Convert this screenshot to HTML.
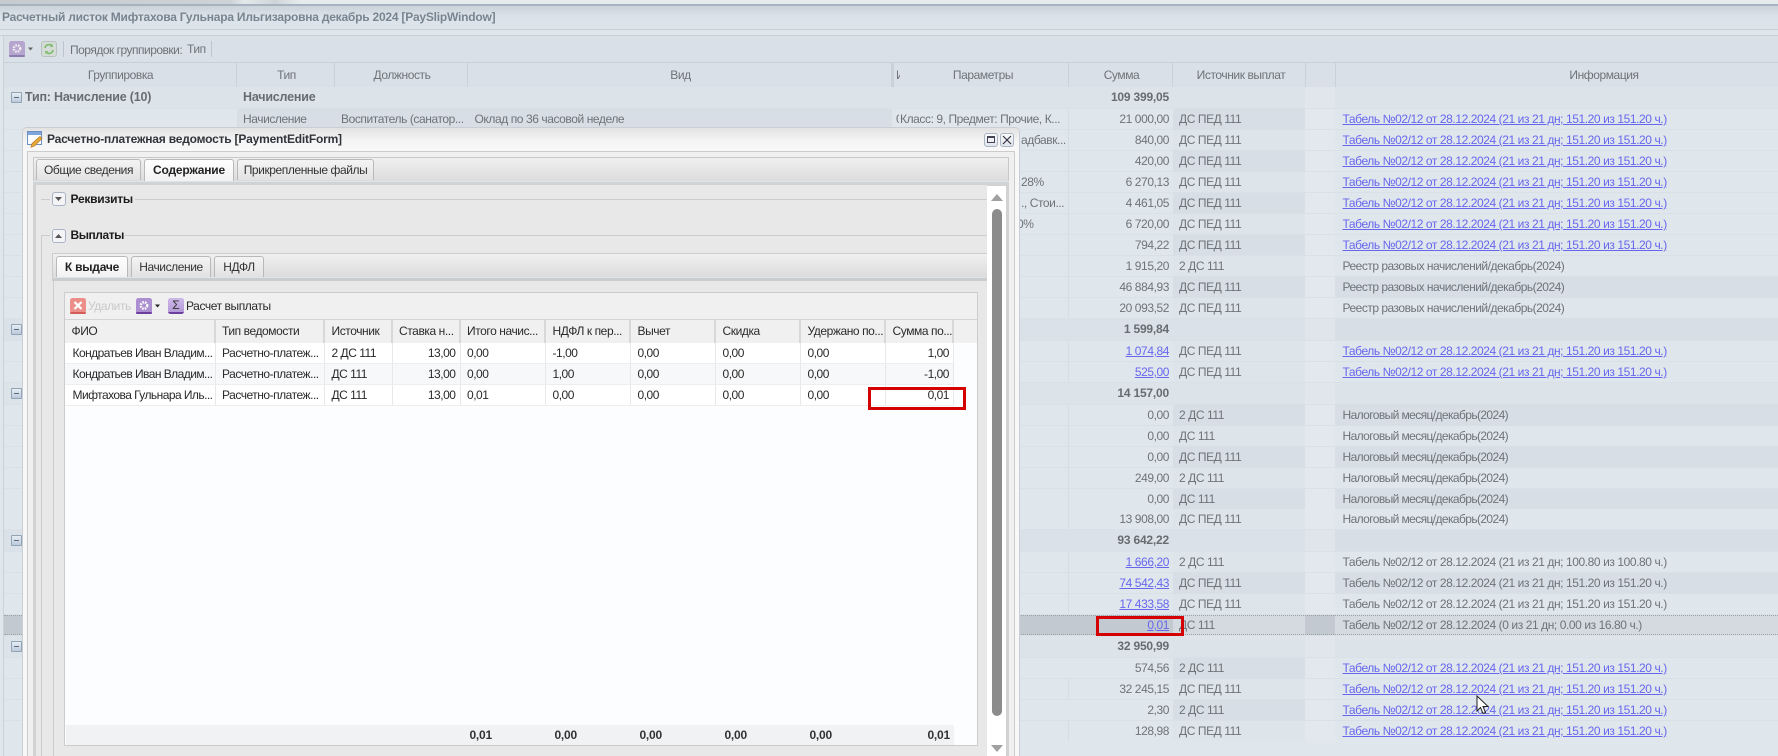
<!DOCTYPE html>
<html lang="ru"><head><meta charset="utf-8"><title>Расчетный листок</title>
<style>
html,body{margin:0;padding:0;width:1778px;height:756px;overflow:hidden}
body{position:relative;background:#dfe6ec;font:12px/20px "Liberation Sans",sans-serif;letter-spacing:-.42px;color:#6d7379}
div,span,a{position:absolute;white-space:nowrap}
a{color:#6767ee;text-decoration:underline}
.r{left:4px;width:1774px;height:20px}
.L{background:linear-gradient(90deg,#dfe6ec 0 232px,#d6dde4 232px 233px,#dfe6ec 233px 1064px,#d6dde4 1064px 1065px,#dfe6ec 1065px 1169px,#dde4ea 1169px 1301px,#e2e8ed 1301px 1331px,#dfe6ec 1331px)}
.D{background:linear-gradient(90deg,#dfe6ec 0 233px,#d7dee5 233px 888px,#dfe6ec 888px 1064px,#d6dde4 1064px 1065px,#dfe6ec 1065px 1169px,#d7dee5 1169px 1301px,#e2e8ed 1301px 1331px,#d7dee5 1331px)}
.K{background:linear-gradient(90deg,#dfe6ec 0 233px,#d7dee5 233px 888px,#dfe6ec 888px 1064px,#d6dde4 1064px 1065px,#dfe6ec 1065px 1169px,#d7dee5 1169px 1301px,#e2e8ed 1301px 1331px,#dfe6ec 1331px)}
.M{background:linear-gradient(90deg,#dfe6ec 0 1169px,#d7dee5 1169px 1301px,#e2e8ed 1301px 1331px,#dfe6ec 1331px)}
.G{background:linear-gradient(90deg,#dae1e8 0 1301px,#dfe5ea 1301px 1331px,#d7dee5 1331px);height:21px}
.H{background:linear-gradient(90deg,#dce3e9 0 1301px,#e0e6eb 1301px 1331px,#dce3e9 1331px);height:21px}
.s{left:1064px;width:101px;text-align:right}
.i{left:1175px}
.n{left:1338.5px}
.b{font-weight:bold;letter-spacing:-.2px;color:#666c72}
.m{left:7px;top:5px;width:9px;height:9px;border:1px solid #93a3b6;background:linear-gradient(#e6edf4,#bccbdb);border-radius:1px}
.m:after{content:"";position:absolute;left:2px;top:4px;width:5px;height:1px;background:#5a6b80}
.hs{top:63px;width:1px;height:24px;background:#c9d2db}
.ht{top:65px;text-align:center;color:#6d7379}
.line{background:#ccc}
.fill{background:#e8e8e8}
.tab{height:21px;border:1px solid #b9b9b9;border-bottom:0;border-radius:3px 3px 0 0;background:linear-gradient(#f4f4f4,#e2e2e2);text-align:center;color:#333;line-height:20px;box-sizing:border-box}
.tab.on{background:linear-gradient(#fff,#f2f2f2);font-weight:bold;color:#222;letter-spacing:-.2px}
.gh{top:320px;height:23px;line-height:23px;color:#2a2a2a;background:#f0f0f0;border-right:2px solid #d8d8d8;box-sizing:border-box;padding-left:6.5px}
.gc{height:20px;color:#2a2a2a;border-right:1px solid #e8e8e8;box-sizing:border-box;padding-left:6.5px;background:#fff;letter-spacing:-.48px}
.alt{background:#f7f8f9}
.ra{text-align:right;padding:0 4px 0 0}
.sum{top:725px;height:20px;font-weight:bold;color:#333;letter-spacing:-.2px;text-align:right}
.fb{width:14px;height:14px;border:1px solid #a9b4c4;border-radius:3px;background:linear-gradient(#fbfbfb,#dfe4ec);box-sizing:border-box}
.red{border:3px solid #d40000;box-sizing:border-box}
</style></head><body>
<div style="left:0;top:0;width:1778px;height:756px;overflow:hidden">

<div style="left:0;top:0;width:1778px;height:4px;background:linear-gradient(90deg,#c6cbcf 0,#cdd2d6 230px,#e3e8eb 245px,#cfd4d8 275px,#e5eaed 300px,#e5eaed 1778px)"></div>
<div style="left:0;top:4px;width:1778px;height:2px;background:#a7b3bf"></div>
<div style="left:0;top:6px;width:1778px;height:23px;background:linear-gradient(#cbd3da,#dbe2e9 45%,#dde4ea)"></div>
<div class="b" style="left:2px;top:7px;color:#78848f;letter-spacing:-.22px">Расчетный листок Мифтахова Гульнара Ильгизаровна декабрь 2024 [PaySlipWindow]</div>
<div style="left:0;top:29px;width:1778px;height:1px;background:#c8d0d8"></div>
<div style="left:0;top:35px;width:1778px;height:1px;background:#c8d0d8"></div>
<div style="left:3px;top:35px;width:1px;height:721px;background:#cad3dc"></div>
<div style="left:4px;top:36px;width:1774px;height:26px;background:#d9e0e7"></div>
<div style="left:4px;top:62px;width:1774px;height:1px;background:#c8d0d8"></div>
<div style="left:4px;top:63px;width:1774px;height:25px;background:#d9e0e8"></div>
<div style="left:4px;top:88px;width:1774px;height:653px;background:#d9e0e7"></div>

<svg style="position:absolute;left:9px;top:41px" width="25" height="16" viewBox="0 0 25 16"><rect width="16" height="16" rx="2.5" fill="#b6a6cf"/><rect y="14" width="16" height="2" rx="1" fill="#8d7cb0"/><circle cx="8" cy="7.5" r="3.2" fill="none" stroke="#eee" stroke-width="2.4" stroke-dasharray="1.6 1"/><path d="M19 6.5h5l-2.5 3z" fill="#666"/></svg>
<svg style="position:absolute;left:41px;top:41px" width="16" height="16" viewBox="0 0 16 16"><rect x=".5" y=".5" width="15" height="15" rx="2.5" fill="#d5dcd8" stroke="#b9c2bf"/><path d="M4 7a4 4 0 0 1 7-2M12 9a4 4 0 0 1-7 2" fill="none" stroke="#7dbb6c" stroke-width="1.6"/><path d="M11.8 3v3h-3zM4.2 13v-3h3z" fill="#7dbb6c"/></svg>
<div style="left:63px;top:41px;width:1px;height:16px;background:#bcc5ce"></div>
<div style="left:70px;top:40px;color:#6d7379;letter-spacing:-.5px">Порядок группировки:</div>
<div style="left:187px;top:39px;color:#6d7379">Тип</div>
<div style="left:211px;top:41px;width:1px;height:16px;background:#bcc5ce"></div>

<div class="hs" style="left:236px"></div><div class="hs" style="left:334px"></div><div class="hs" style="left:467px"></div><div class="hs" style="left:891px;width:3px"></div><div class="hs" style="left:1068px"></div><div class="hs" style="left:1172px"></div><div class="hs" style="left:1305px"></div><div class="hs" style="left:1335px"></div>
<div class="ht" style="left:4px;width:233px">Группировка</div>
<div class="ht" style="left:238px;width:97px">Тип</div>
<div class="ht" style="left:336px;width:132px">Должность</div>
<div class="ht" style="left:469px;width:423px">Вид</div>
<div class="ht" style="left:896px;width:4px;overflow:hidden">И</div>
<div class="ht" style="left:899px;width:168px">Параметры</div>
<div class="ht" style="left:1070px;width:103px">Сумма</div>
<div class="ht" style="left:1175px;width:132px">Источник выплат</div>
<div class="ht" style="left:1336px;width:536px">Информация</div>

<div class="r H" style="top:87px"><div class="m"></div><span class="b" style="left:21px;font-size:12.5px">Тип: Начисление (10)</span><span class="b" style="left:239px;font-size:12.5px">Начисление</span><span class="b s">109 399,05</span></div>
<div class="r K" style="top:109px"><span style="left:239px">Начисление</span><span style="left:337px">Воспитатель (санатор...</span><span style="left:470.5px">Оклад по 36 часовой неделе</span><span style="left:892px;width:3px;overflow:hidden">0</span><span style="left:896px">Класс: 9, Предмет: Прочие, К...</span><span class="s">21 000,00</span><span class="i">ДС ПЕД 111</span><a class="n">Табель №02/12 от 28.12.2024 (21 из 21 дн; 151.20 из 151.20 ч.)</a></div>
<div class="r L" style="top:130px"><span style="left:1017px">адбавк...</span><span class="s">840,00</span><span class="i">ДС ПЕД 111</span><a class="n">Табель №02/12 от 28.12.2024 (21 из 21 дн; 151.20 из 151.20 ч.)</a></div>
<div class="r K" style="top:151px"><span class="s">420,00</span><span class="i">ДС ПЕД 111</span><a class="n">Табель №02/12 от 28.12.2024 (21 из 21 дн; 151.20 из 151.20 ч.)</a></div>
<div class="r L" style="top:172px"><span style="left:1017px">28%</span><span class="s">6 270,13</span><span class="i">ДС ПЕД 111</span><a class="n">Табель №02/12 от 28.12.2024 (21 из 21 дн; 151.20 из 151.20 ч.)</a></div>
<div class="r K" style="top:193px"><span style="left:1017px">., Стои...</span><span class="s">4 461,05</span><span class="i">ДС ПЕД 111</span><a class="n">Табель №02/12 от 28.12.2024 (21 из 21 дн; 151.20 из 151.20 ч.)</a></div>
<div class="r L" style="top:214px"><span style="left:1013px">0%</span><span class="s">6 720,00</span><span class="i">ДС ПЕД 111</span><a class="n">Табель №02/12 от 28.12.2024 (21 из 21 дн; 151.20 из 151.20 ч.)</a></div>
<div class="r K" style="top:235px"><span class="s">794,22</span><span class="i">ДС ПЕД 111</span><a class="n">Табель №02/12 от 28.12.2024 (21 из 21 дн; 151.20 из 151.20 ч.)</a></div>
<div class="r L" style="top:256px"><span class="s">1 915,20</span><span class="i">2 ДС 111</span><span class="n" style="letter-spacing:-.5px">Реестр разовых начислений/декабрь(2024)</span></div>
<div class="r D" style="top:277px"><span class="s">46 884,93</span><span class="i">ДС ПЕД 111</span><span class="n" style="letter-spacing:-.5px">Реестр разовых начислений/декабрь(2024)</span></div>
<div class="r L" style="top:298px"><span class="s">20 093,52</span><span class="i">ДС ПЕД 111</span><span class="n" style="letter-spacing:-.5px">Реестр разовых начислений/декабрь(2024)</span></div>
<div class="r G" style="top:319px"><div class="m"></div><span class="b s">1 599,84</span></div>
<div class="r L" style="top:341px"><a class="s">1 074,84</a><span class="i">ДС ПЕД 111</span><a class="n">Табель №02/12 от 28.12.2024 (21 из 21 дн; 151.20 из 151.20 ч.)</a></div>
<div class="r L" style="top:362px"><a class="s">525,00</a><span class="i">ДС ПЕД 111</span><a class="n">Табель №02/12 от 28.12.2024 (21 из 21 дн; 151.20 из 151.20 ч.)</a></div>
<div class="r H" style="top:383px"><div class="m"></div><span class="b s">14 157,00</span></div>
<div class="r D" style="top:405px"><span class="s">0,00</span><span class="i">2 ДС 111</span><span class="n" style="letter-spacing:-.6px">Налоговый месяц/декабрь(2024)</span></div>
<div class="r L" style="top:426px"><span class="s">0,00</span><span class="i">ДС 111</span><span class="n" style="letter-spacing:-.6px">Налоговый месяц/декабрь(2024)</span></div>
<div class="r D" style="top:447px"><span class="s">0,00</span><span class="i">ДС ПЕД 111</span><span class="n" style="letter-spacing:-.6px">Налоговый месяц/декабрь(2024)</span></div>
<div class="r L" style="top:468px"><span class="s">249,00</span><span class="i">2 ДС 111</span><span class="n" style="letter-spacing:-.6px">Налоговый месяц/декабрь(2024)</span></div>
<div class="r D" style="top:489px"><span class="s">0,00</span><span class="i">ДС 111</span><span class="n" style="letter-spacing:-.6px">Налоговый месяц/декабрь(2024)</span></div>
<div class="r L" style="top:509px"><span class="s">13 908,00</span><span class="i">ДС ПЕД 111</span><span class="n" style="letter-spacing:-.6px">Налоговый месяц/декабрь(2024)</span></div>
<div class="r G" style="top:530px"><div class="m"></div><span class="b s">93 642,22</span></div>
<div class="r L" style="top:552px"><a class="s">1 666,20</a><span class="i">2 ДС 111</span><span class="n">Табель №02/12 от 28.12.2024 (21 из 21 дн; 100.80 из 100.80 ч.)</span></div>
<div class="r D" style="top:573px"><a class="s">74 542,43</a><span class="i">ДС ПЕД 111</span><span class="n">Табель №02/12 от 28.12.2024 (21 из 21 дн; 151.20 из 151.20 ч.)</span></div>
<div class="r L" style="top:594px"><a class="s">17 433,58</a><span class="i">ДС ПЕД 111</span><span class="n">Табель №02/12 от 28.12.2024 (21 из 21 дн; 151.20 из 151.20 ч.)</span></div>
<div class="r" style="top:615px;height:20px;background:linear-gradient(90deg,#c2c9d0 0 1169px,#d5dae0 1169px 1301px,#c2c9d0 1301px 1331px,#d5dae0 1331px);border-top:1px dotted #9aa2aa;border-bottom:1px dotted #9aa2aa;box-sizing:border-box;line-height:18px"><a class="s">0,01</a><span class="i">ДС 111</span><span class="n">Табель №02/12 от 28.12.2024 (0 из 21 дн; 0.00 из 16.80 ч.)</span></div>
<div class="r H" style="top:636px"><div class="m"></div><span class="b s">32 950,99</span></div>
<div class="r M" style="top:658px"><span class="s">574,56</span><span class="i">2 ДС 111</span><a class="n">Табель №02/12 от 28.12.2024 (21 из 21 дн; 151.20 из 151.20 ч.)</a></div>
<div class="r L" style="top:679px"><span class="s">32 245,15</span><span class="i">ДС ПЕД 111</span><a class="n">Табель №02/12 от 28.12.2024 (21 из 21 дн; 151.20 из 151.20 ч.)</a></div>
<div class="r M" style="top:700px"><span class="s">2,30</span><span class="i">2 ДС 111</span><a class="n">Табель №02/12 от 28.12.2024 (21 из 21 дн; 151.20 из 151.20 ч.)</a></div>
<div class="r L" style="top:721px"><span class="s">128,98</span><span class="i">ДС ПЕД 111</span><a class="n">Табель №02/12 от 28.12.2024 (21 из 21 дн; 151.20 из 151.20 ч.)</a></div>

<div class="red" style="left:1096px;top:616px;width:88px;height:20px"></div>

<!-- window -->
<div style="left:22px;top:127px;width:998px;height:640px;background:#f8f8f8;border:1px solid #c8ced4;box-sizing:border-box;border-radius:5px 5px 0 0"></div>
<div style="left:23px;top:128px;width:996px;height:23px;background:linear-gradient(#e2e2e2,#f6f6f6 60%,#f8f8f8);border-radius:4px 4px 0 0"></div>
<svg style="position:absolute;left:27px;top:131px" width="16" height="17" viewBox="0 0 16 17"><rect x=".5" y=".5" width="14" height="13" fill="#fdfdfd" stroke="#6f8fc0"/><rect x="1" y="1" width="13" height="3" fill="#7fa6dc"/><path d="M13 5.5l2 2-7.5 7.5-3.5 1.2 1-3.7z" fill="#e9a83a" stroke="#b77a20" stroke-width=".7"/></svg>
<div class="b" style="left:47px;top:129px;color:#30343a;letter-spacing:-.2px">Расчетно-платежная ведомость [PaymentEditForm]</div>
<div class="fb" style="left:984px;top:133px"></div><div style="left:987px;top:136px;width:8px;height:7px;border:1px solid #445;border-top-width:2px;box-sizing:border-box"></div>
<div class="fb" style="left:1000px;top:133px"></div><svg style="position:absolute;left:1002px;top:135px" width="10" height="10" viewBox="0 0 10 10"><path d="M1 1l8 8M9 1l-8 8" stroke="#334" stroke-width="1.2"/></svg>

<div style="left:27px;top:151px;width:988px;height:620px;background:#f0f0f0;border:1px solid #ccc;box-sizing:border-box"></div>
<div style="left:33px;top:157px;width:976px;height:610px;background:#d2d2d2"></div>
<div style="left:33px;top:157px;width:976px;height:24px;background:linear-gradient(#f0f0f0,#dcdcdc);border:1px solid #c8c8c8;border-bottom:0;box-sizing:border-box"></div>
<div class="tab" style="left:36px;top:159px;width:105px">Общие сведения</div>
<div class="tab on" style="left:144px;top:159px;width:90px;height:22px">Содержание</div>
<div class="tab" style="left:237px;top:159px;width:137px">Прикрепленные файлы</div>
<div style="left:33px;top:181px;width:976px;height:1px;background:#d9e6f0"></div>
<div class="fill" style="left:36px;top:185px;width:951px;height:580px"></div>

<div style="left:987px;top:186px;width:19px;height:570px;background:#fff"></div>
<svg style="position:absolute;left:990px;top:193px" width="14" height="10"><path d="M7 1l6 7H1z" fill="#a0a0a0"/></svg>
<div style="left:992px;top:209px;width:10px;height:507px;background:#8b8b8b;border-radius:5px"></div>
<svg style="position:absolute;left:990px;top:744px" width="14" height="10"><path d="M1 1h12l-6 7z" fill="#a0a0a0"/></svg>

<div class="line" style="left:41px;top:199px;width:946px;height:1px"></div>
<div class="line" style="left:41px;top:235px;width:946px;height:1px"></div>
<div class="line" style="left:41px;top:235px;width:1px;height:521px"></div>
<div class="fill" style="left:50px;top:192px;width:85px;height:15px"></div>
<div class="fill" style="left:50px;top:228px;width:75px;height:15px"></div>
<div class="fb" style="left:52px;top:192px;background:#f4f4f6"></div><svg style="position:absolute;left:55px;top:196px" width="8" height="6"><path d="M0 1h7l-3.5 4z" fill="#555"/></svg>
<div class="fb" style="left:52px;top:229px;background:#f4f4f6"></div><svg style="position:absolute;left:55px;top:233px" width="8" height="6"><path d="M0 5h7l-3.5-4z" fill="#555"/></svg>
<div class="b" style="left:70.5px;top:189px;color:#1c1c1c;letter-spacing:-.25px">Реквизиты</div>
<div class="b" style="left:70.5px;top:225px;color:#1c1c1c;letter-spacing:-.45px">Выплаты</div>

<div style="left:52px;top:253px;width:935px;height:28px;background:#ccc"></div>
<div style="left:53px;top:254px;width:934px;height:23px;background:linear-gradient(#f0f0f0,#dcdcdc)"></div>
<div style="left:53px;top:277px;width:934px;height:1px;background:#d9e6f0"></div>
<div class="tab on" style="left:56px;top:256px;width:72px">К выдаче</div>
<div class="tab" style="left:131px;top:256px;width:80px">Начисление</div>
<div class="tab" style="left:214px;top:256px;width:50px">НДФЛ</div>
<div class="fill" style="left:53px;top:281px;width:934px;height:475px"></div>
<div class="line" style="left:52.5px;top:281px;width:1px;height:475px"></div>

<div style="left:64px;top:292px;width:914px;height:454px;background:#fcfdfe;border:1px solid #ccc;box-sizing:border-box"></div>
<div style="left:65px;top:293px;width:912px;height:26px;background:#f0f0f0;border-bottom:1px solid #d4d4d4"></div>
<svg style="position:absolute;left:70px;top:298px" width="16" height="16" viewBox="0 0 16 16"><rect width="16" height="15" rx="2.5" fill="#ec8f8b"/><rect y="14" width="16" height="2" rx="1" fill="#d45d5a"/><path d="M4.5 4l7 7M11.500 4l-7 7" stroke="#fff" stroke-width="2.200"/></svg>
<div style="left:88px;top:296px;color:#c9c9c9">Удалить</div>
<svg style="position:absolute;left:136px;top:298px" width="25" height="16" viewBox="0 0 25 16"><rect width="16" height="16" rx="2.5" fill="#ab8fd0"/><rect y="14" width="16" height="2" rx="1" fill="#6c3f9e"/><circle cx="8" cy="7.5" r="3.2" fill="none" stroke="#fff" stroke-width="2.4" stroke-dasharray="1.6 1"/><path d="M19 6.5h5l-2.5 3z" fill="#222"/></svg>
<div style="left:168px;top:298px;width:16px;height:16px;border-radius:2.5px;background:linear-gradient(#cdb9e8 0,#b49ad8 87%,#6c3f9e 87%);color:#333;font:12px/14px 'Liberation Sans',sans-serif;text-align:center;letter-spacing:0">Σ</div>
<div style="left:186px;top:296px;color:#2a2a2a">Расчет выплаты</div>

<div style="left:65px;top:320px;width:912px;height:23px;background:#f0f0f0"></div>
<div class="gh" style="left:65px;width:150.5px">ФИО</div>
<div class="gh" style="left:215.5px;width:109.5px">Тип ведомости</div>
<div class="gh" style="left:325px;width:67.5px">Источник</div>
<div class="gh" style="left:392.5px;width:68px">Ставка н...</div>
<div class="gh" style="left:460.5px;width:85.5px">Итого начис...</div>
<div class="gh" style="left:546px;width:85px">НДФЛ к пер...</div>
<div class="gh" style="left:631px;width:85px">Вычет</div>
<div class="gh" style="left:716px;width:85px">Скидка</div>
<div class="gh" style="left:801px;width:85px">Удержано по...</div>
<div class="gh" style="left:886px;width:68px">Сумма по...</div>

<div style="left:65px;top:343px;width:889px;height:62px;background:#eceef0"></div>
<div class="gc" style="left:65px;top:343px;width:150.5px;padding-left:7.5px;letter-spacing:-.55px">Кондратьев Иван Владим...</div>
<div class="gc" style="left:215.5px;top:343px;width:109.5px">Расчетно-платеж...</div>
<div class="gc" style="left:325px;top:343px;width:67.5px">2 ДС 111</div>
<div class="gc ra" style="left:392.5px;top:343px;width:68px">13,00</div>
<div class="gc" style="left:460.5px;top:343px;width:85.5px">0,00</div>
<div class="gc" style="left:546px;top:343px;width:85px">-1,00</div>
<div class="gc" style="left:631px;top:343px;width:85px">0,00</div>
<div class="gc" style="left:716px;top:343px;width:85px">0,00</div>
<div class="gc" style="left:801px;top:343px;width:85px">0,00</div>
<div class="gc ra" style="left:886px;top:343px;width:68px">1,00</div>

<div class="gc alt" style="left:65px;top:364px;width:150.5px;padding-left:7.5px;letter-spacing:-.55px">Кондратьев Иван Владим...</div>
<div class="gc alt" style="left:215.5px;top:364px;width:109.5px">Расчетно-платеж...</div>
<div class="gc alt" style="left:325px;top:364px;width:67.5px">ДС 111</div>
<div class="gc alt ra" style="left:392.5px;top:364px;width:68px">13,00</div>
<div class="gc alt" style="left:460.5px;top:364px;width:85.5px">0,00</div>
<div class="gc alt" style="left:546px;top:364px;width:85px">1,00</div>
<div class="gc alt" style="left:631px;top:364px;width:85px">0,00</div>
<div class="gc alt" style="left:716px;top:364px;width:85px">0,00</div>
<div class="gc alt" style="left:801px;top:364px;width:85px">0,00</div>
<div class="gc alt ra" style="left:886px;top:364px;width:68px">-1,00</div>

<div class="gc" style="left:65px;top:385px;width:150.5px;padding-left:7.5px;letter-spacing:-.55px">Мифтахова Гульнара Иль...</div>
<div class="gc" style="left:215.5px;top:385px;width:109.5px">Расчетно-платеж...</div>
<div class="gc" style="left:325px;top:385px;width:67.5px">ДС 111</div>
<div class="gc ra" style="left:392.5px;top:385px;width:68px">13,00</div>
<div class="gc" style="left:460.5px;top:385px;width:85.5px">0,01</div>
<div class="gc" style="left:546px;top:385px;width:85px">0,00</div>
<div class="gc" style="left:631px;top:385px;width:85px">0,00</div>
<div class="gc" style="left:716px;top:385px;width:85px">0,00</div>
<div class="gc" style="left:801px;top:385px;width:85px">0,00</div>
<div class="gc ra" style="left:886px;top:385px;width:68px">0,01</div>
<div style="left:65px;top:405px;width:889px;height:1px;background:#eceef0"></div>

<div class="red" style="left:868px;top:387px;width:98px;height:23px"></div>

<div style="left:66px;top:725px;width:888px;height:20px;background:#f1f2f3"></div>
<div class="sum" style="left:422px;width:70px">0,01</div>
<div class="sum" style="left:507px;width:70px">0,00</div>
<div class="sum" style="left:590px;width:72px">0,00</div>
<div class="sum" style="left:675px;width:72px">0,00</div>
<div class="sum" style="left:760px;width:72px">0,00</div>
<div class="sum" style="left:880px;width:70px">0,01</div>

<svg style="position:absolute;left:1476px;top:695px" width="13" height="20" viewBox="0 0 13 20"><path d="M1 1v15l3.5-3.5 2.5 6 2.500-1-2.500-6h5z" fill="#fff" stroke="#222" stroke-width="1"/></svg>
</div>
</body></html>
